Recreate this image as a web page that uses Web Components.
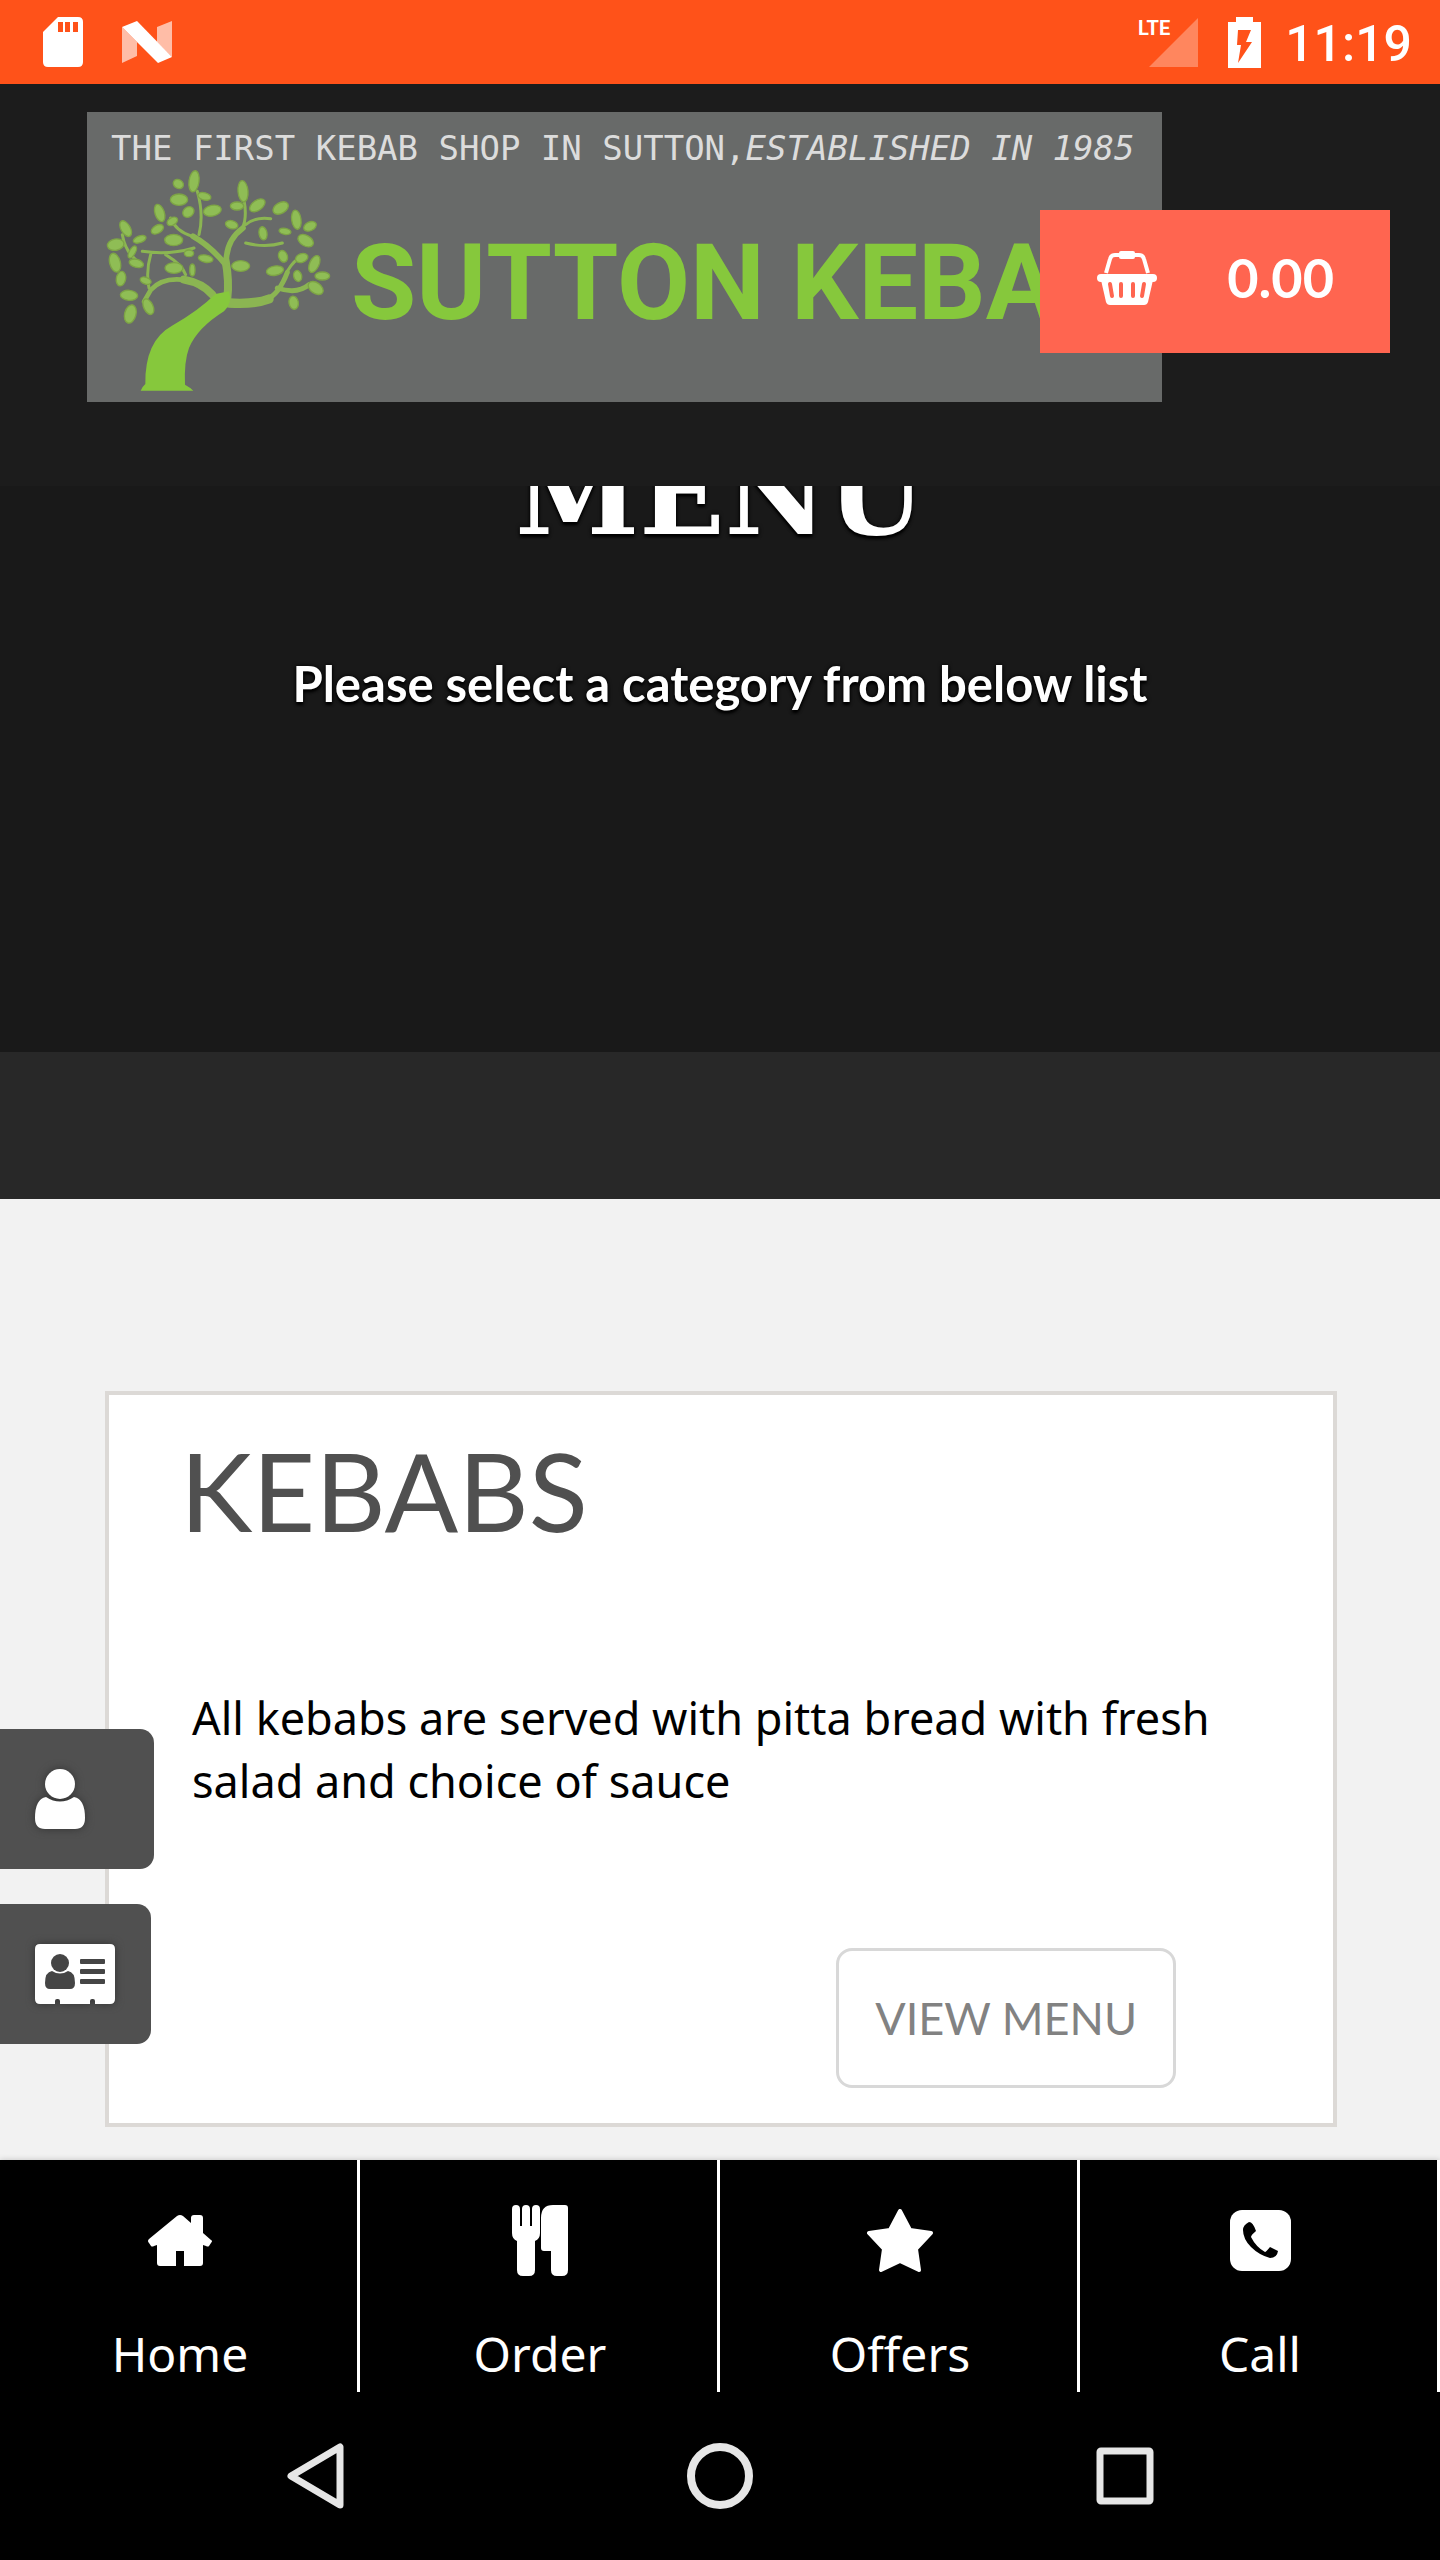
<!DOCTYPE html>
<html lang="en">
<head>
<meta charset="utf-8">
<meta name="viewport" content="width=device-width, initial-scale=1">
<title>Sutton Kebab - Menu</title>
<style>
body {
    margin: 0;
    background: #f2f2f2;
    font-family: "Noto Sans", "Open Sans", sans-serif;
}
</style>
</head>
<body>
<kebab-app></kebab-app>

<script>
// Registers a custom element whose shadow root is cloned from the given markup.
function define(name, html) {
    const template = document.createElement('template');
    template.innerHTML = html;
    customElements.define(name, class extends HTMLElement {
        constructor() {
            super();
            this.attachShadow({ mode: 'open' }).appendChild(template.content.cloneNode(true));
        }
    });
}

// Each icon: [width, height, markup]
const ICONS = {
    sd: [40, 50, '<path fill="#fff" d="M15 0h20q5 0 5 5v40q0 5-5 5H5q-5 0-5-5V15z"/><path fill="#ff5219" d="M15 5h5v10h-5zM22 5h5v10h-5zM30 5h5v10h-5z"/>'],
    nougat: [50, 42, '<path fill="#fff" opacity=".62" d="M0 6l15 15v14L0 42zM50 0v36L35 21V6z"/><path fill="#fff" d="M0 6L15 0l35 36-14 6z"/>'],
    signal: [49, 49, '<path fill="#fff" opacity=".3" d="M49 0v49H0z"/>'],
    battery: [33, 51, '<path fill="#fff" d="M8 0h17v5h8v46H0V5h8z"/><path fill="#ff5219" d="M10 13h13l-5 12h6L10 46l3-18H9z"/>'],
    basket: [62, 54, '<path fill="none" stroke="#fff" stroke-width="4" d="M10 22l4-14q1-4 5-4h24q4 0 5 4l4 14"/><rect x="23" y="0" width="16" height="8" rx="2" fill="#fff"/><rect x="1" y="23" width="60" height="8" rx="4" fill="#fff"/><path fill="#fff" d="M5 29h52l-5 22q-1 3-4 3H14q-3 0-4-3z"/><path stroke="#ff6550" stroke-width="4" stroke-linecap="round" d="M14 33l2 12M25 33v12M37 33v12M48 33l-2 12"/>'],
    user: [50, 60, '<circle cx="25" cy="15" r="15" fill="#fff"/><path fill="#fff" d="M11 28q14 9 28 0 11 2 11 21 0 11-10 11H10Q0 60 0 49 0 30 11 28z"/>'],
    contact: [80, 60, '<path fill="#fff" d="M5 0h70q5 0 5 5v50q0 5-5 5H60v-3q0-2-2-2h-1q-2 0-2 2v3H25v-3q0-2-2-2h-1q-2 0-2 2v3H5q-5 0-5-5V5q0-5 5-5z"/><g fill="#454545"><circle cx="25" cy="19" r="9"/><path d="M17 27q8 5 16 0 7 1 7 12 0 6-5 6H15q-5 0-5-6 0-11 7-12z"/><rect x="45" y="15" width="25" height="5" rx="1"/><rect x="45" y="25" width="25" height="5" rx="1"/><rect x="45" y="35" width="25" height="5" rx="1"/></g>'],
    home: [64, 51, '<path fill="#fff" d="M29 1q3-2 6 0l8 7V3q0-3 3-3h6q3 0 3 3v15l8 7q2 1 0 3l-2 3q-1 1-3 0l-3-1v18q0 3-3 3H36V36h-8v15H12q-3 0-3-3V30l-3 1q-2 1-3 0l-2-3q-2-2 0-4z"/>'],
    food: [56, 71, '<path fill="#fff" d="M0 4q0-4 4-4t4 4v17h2V4q0-4 4-4t4 4v17h2V4q0-4 4-4t4 4v24q0 6-5 8v29q0 6-6 6h-6q-6 0-6-6V36q-5-2-5-8z"/><path fill="#fff" d="M41 0h12q3 0 3 3v62q0 6-6 6h-5q-6 0-6-6V46h-7q-3 0-3-3V13Q29 0 41 0z"/>'],
    star: [66, 63, '<path fill="#fff" stroke="#fff" stroke-width="4" stroke-linejoin="round" d="M33 2l10 19 21 3-15 16 3 21-19-9-19 9 3-21L2 24l21-3z"/>'],
    phone: [61, 61, '<rect width="61" height="61" rx="12" fill="#fff"/><path fill="#000" d="M19 12q-6 3-6 8 0 9 8 17t19 11q7 0 8-7l-8-4q-4 5-5 5-9-5-14-15 0-2 5-6-3-9-7-9z"/>'],
    back: [57, 66, '<path fill="none" stroke="#e6e6e6" stroke-width="7" stroke-linejoin="round" d="M53 4v58L4 33z"/>'],
    circle: [66, 66, '<circle cx="33" cy="33" r="29" fill="none" stroke="#e6e6e6" stroke-width="8"/>'],
    square: [58, 58, '<rect x="4" y="4" width="50" height="50" rx="1" fill="none" stroke="#e6e6e6" stroke-width="7"/>']
};

class ShopIcon extends HTMLElement {
    constructor() {
        super();
        this.attachShadow({ mode: 'open' });
    }
    connectedCallback() {
        const [width, height, markup] = ICONS[this.getAttribute('name')];
        this.shadowRoot.innerHTML = `
<style>
:host { display: inline-flex; flex: none; }
</style>
<svg width="${width}" height="${height}" viewBox="0 0 ${width} ${height}" aria-hidden="true">${markup}</svg>`;
    }
}
customElements.define('shop-icon', ShopIcon);

// Leaves of the logo tree: x, y, half width, half height, rotation
const LEAVES = [
    [585, 540, 15, 32, 8], [538, 548, 16, 13, 30], [540, 595, 26, 17, 0], [616, 585, 20, 11, 15],
    [568, 632, 18, 15, -40], [640, 628, 27, 16, -12], [482, 635, 14, 27, -18], [520, 660, 17, 11, -30],
    [475, 684, 20, 12, -30], [732, 570, 15, 32, -5], [714, 614, 20, 12, 0], [775, 612, 26, 15, -35],
    [845, 620, 25, 16, -30], [698, 670, 19, 12, 15], [792, 696, 12, 20, -10], [892, 655, 14, 29, -8],
    [933, 675, 20, 13, -25], [858, 690, 18, 9, 10], [920, 718, 25, 16, 30], [380, 682, 14, 26, -30],
    [350, 730, 25, 17, -10], [422, 714, 20, 10, -20], [524, 716, 27, 17, 0], [348, 784, 16, 29, -15],
    [412, 786, 22, 12, 15], [366, 832, 14, 22, 10], [525, 800, 27, 16, 0], [440, 838, 17, 10, 20],
    [390, 882, 26, 15, 5], [448, 916, 14, 25, -25], [394, 938, 17, 28, 15], [725, 794, 27, 16, 0],
    [828, 808, 26, 14, -10], [852, 765, 13, 18, -20], [908, 770, 19, 13, -20], [946, 788, 14, 27, 25],
    [896, 824, 12, 17, -15], [970, 824, 22, 12, 0], [950, 860, 25, 16, 35], [884, 904, 14, 20, -10],
    [570, 756, 14, 10, 0], [620, 772, 22, 11, 10], [580, 806, 8, 18, 0], [400, 752, 9, 20, 30]
];

define('shop-logo', `
<style>
:host {
    display: block;
    box-sizing: border-box;
    width: 100%;
    max-width: 1075px;
    height: 290px;
    overflow: hidden;
    background: #686a69;
    white-space: nowrap;
}
p {
    margin: 0;
    padding: 16px 0 0 24px;
    color: #dcdcdc;
    font: 34px/40px "DejaVu Sans Mono", monospace;
}
.brand {
    display: flex;
    align-items: center;
    gap: 18px;
    padding-left: 12px;
}
.brand svg {
    flex: none;
}
.name {
    color: #86c83c;
    font: bold 106px/120px Roboto, sans-serif;
}
</style>
<p>THE FIRST KEBAB SHOP IN SUTTON,<i>ESTABLISHED IN 1985</i></p>
<div class="brand">
    <svg width="234" height="230" viewBox="300 500 702 690" aria-hidden="true">
        <g fill="none" stroke="#8bb552" stroke-linecap="round">
            <path stroke-width="24" d="M685 890q6-50-5-110"/>
            <path stroke-width="17" d="M682 775q2-60 50-95M680 790q-45-55-98-85"/>
            <path stroke-width="24" d="M640 880q-30-35-85-45"/>
            <path stroke-width="14" d="M560 836q-70-10-105 30l-20 35"/>
            <path stroke-width="28" d="M690 905q75 5 120-12"/>
            <path stroke-width="15" d="M805 893q35-15 60-80M835 860q60 20 95-10"/>
            <path stroke-width="9" d="M730 680q15-30 5-85M600 700q15-60-5-130M430 750q80 12 155-10M455 760q-15 50-5 100M740 725q60 15 110 0M740 670q30-25 75-18M580 705q-50-15-65-55M865 810q20-35 40-40M370 700q10 60 60 90M500 760q50 30 60 60"/>
        </g>
        <path fill="#86c83c" d="M690 870q12 35-15 60-80 50-105 110-15 40-12 110 15 8 25 18H425q5-12 14-20-2-130 80-175 80-45 130-95z"/>
        <g fill="#8fbd55" stroke="#7da445" stroke-width="4">${LEAVES.map(([x, y, rx, ry, r]) =>
            `<ellipse cx="${x}" cy="${y}" rx="${rx}" ry="${ry}" transform="rotate(${r} ${x} ${y})"/>`).join('')}</g>
    </svg>
    <span class="name">SUTTON KEBAB</span>
</div>
`);

define('status-bar', `
<style>
:host {
    display: flex;
    align-items: center;
    justify-content: space-between;
    box-sizing: border-box;
    height: 84px;
    padding: 0 28px 0 43px;
    background: #ff5219;
    color: #fff;
}
div {
    display: flex;
    align-items: center;
}
.left {
    gap: 39px;
}
.network {
    position: relative;
    margin-right: 30px;
}
.network span {
    position: absolute;
    right: 28px;
    top: 0;
    font: bold 20px/20px Roboto, sans-serif;
}
time {
    margin-left: 24px;
    padding-top: 3px;
    font: 500 50px/60px Roboto, sans-serif;
}
</style>
<div class="left"><shop-icon name="sd"></shop-icon><shop-icon name="nougat"></shop-icon></div>
<div>
    <div class="network"><span>LTE</span><shop-icon name="signal"></shop-icon></div>
    <shop-icon name="battery"></shop-icon>
    <time>11:19</time>
</div>
`);

define('basket-button', `
<style>
button {
    display: flex;
    align-items: center;
    justify-content: space-between;
    box-sizing: border-box;
    width: 350px;
    height: 143px;
    padding: 0 56px 8px;
    border: 0;
    background: #ff6550;
    color: #fff;
    font: bold 54px/64px Lato, sans-serif;
}
</style>
<button type="button" aria-label="Basket"><shop-icon name="basket"></shop-icon><slot></slot></button>
`);

define('shop-header', `
<style>
:host {
    display: block;
    position: relative;
    box-sizing: border-box;
    height: 402px;
    padding: 28px 87px;
    background: #1c1c1c;
}
/* The basket lies over the logo */
basket-button {
    position: absolute;
    top: 126px;
    right: 50px;
}
</style>
<shop-logo></shop-logo>
<basket-button>0.00</basket-button>
`);

define('menu-hero', `
<style>
/* The page is scrolled, so the title slides under the header */
:host {
    display: block;
    margin-top: -82px;
    padding: 26px 0 339px;
    background: #191919;
    color: #fff;
    text-align: center;
    text-shadow: 0 3px 3px #000, 0 0 4px #000;
}
h1 {
    margin: 0 0 93px;
    font: bold 112px/130px "DejaVu Serif", serif;
}
p {
    margin: 0;
    font: bold 49px/60px Lato, sans-serif;
}
</style>
<h1><slot name="title"></slot></h1>
<p><slot></slot></p>
`);

define('category-card', `
<style>
:host {
    display: flex;
    flex-direction: column;
    margin: 192px 103px 32px 105px;
    padding: 35px 71px;
    border: 4px solid #dcd9d6;
    background: #fff;
}
h2 {
    margin: 0;
    color: #505050;
    font: 109px/120px Lato, sans-serif;
}
p {
    margin: 136px 0 136px 12px;
    color: #000;
    font-size: 45px;
    line-height: 63px;
}
button {
    align-self: flex-end;
    box-sizing: border-box;
    height: 140px;
    margin-right: 86px;
    padding: 0 36px;
    border: 3px solid #d8d8d8;
    border-radius: 16px;
    background: #fff;
    color: #828282;
    font: 45px/56px Lato, sans-serif;
}
</style>
<h2><slot name="title"></slot></h2>
<p><slot></slot></p>
<button type="button">VIEW MENU</button>
`);

define('side-tabs', `
<style>
:host {
    position: fixed;
    z-index: 3;
    left: 0;
    bottom: 516px;
    display: flex;
    flex-direction: column;
    align-items: flex-start;
    gap: 35px;
}
button {
    display: flex;
    align-items: center;
    height: 140px;
    padding: 0 36px 0 35px;
    border: 0;
    border-radius: 0 14px 14px 0;
    background: #505050;
}
.account {
    padding-right: 69px;
}
shop-icon {
    filter: drop-shadow(0 0 4px #333);
}
</style>
<button type="button" class="account" aria-label="Account"><shop-icon name="user"></shop-icon></button>
<button type="button" aria-label="Contact"><shop-icon name="contact"></shop-icon></button>
`);

define('tab-link', `
<style>
:host {
    display: block;
    flex: 1;
    box-shadow: inset -3px 0 #fff;
}
a {
    display: flex;
    flex-direction: column;
    align-items: center;
    color: #fff;
    font-size: 48px;
    line-height: 68px;
    text-decoration: none;
}
.icon {
    display: flex;
    align-items: center;
    height: 160px;
}
</style>
<a href="#"><span class="icon"><slot name="icon"></slot></span><slot></slot></a>
`);

define('tab-bar', `
<style>
:host {
    display: flex;
    height: 232px;
    background: #000;
    box-shadow: 0 0 6px rgba(0, 0, 0, .2);
}
</style>
<tab-link><shop-icon slot="icon" name="home"></shop-icon>Home</tab-link>
<tab-link><shop-icon slot="icon" name="food"></shop-icon>Order</tab-link>
<tab-link><shop-icon slot="icon" name="star"></shop-icon>Offers</tab-link>
<tab-link><shop-icon slot="icon" name="phone"></shop-icon>Call</tab-link>
`);

define('system-nav', `
<style>
:host {
    display: flex;
    align-items: center;
    justify-content: space-between;
    height: 168px;
    padding: 0 286px 0 287px;
    background: #000;
}
button {
    display: flex;
    padding: 0;
    border: 0;
    background: none;
}
</style>
<button type="button" aria-label="Back"><shop-icon name="back"></shop-icon></button>
<button type="button" aria-label="Home screen"><shop-icon name="circle"></shop-icon></button>
<button type="button" aria-label="Recent apps"><shop-icon name="square"></shop-icon></button>
`);

define('kebab-app', `
<style>
:host {
    display: flex;
    flex-direction: column;
    min-height: 100vh;
}
header, footer {
    position: sticky;
    z-index: 2;
}
header { top: 0; }
footer { bottom: 0; }
main { flex: 1; }
.band {
    height: 147px;
    background: #282828;
}
</style>
<header>
    <status-bar></status-bar>
    <shop-header></shop-header>
</header>
<main>
    <menu-hero>
        <span slot="title">MENU</span>
        Please select a category from below list
    </menu-hero>
    <div class="band"></div>
    <category-card>
        <span slot="title">KEBABS</span>
        All kebabs are served with pitta bread with fresh salad and choice of sauce
    </category-card>
</main>
<side-tabs></side-tabs>
<footer>
    <tab-bar></tab-bar>
    <system-nav></system-nav>
</footer>
`);
</script>
</body>
</html>
